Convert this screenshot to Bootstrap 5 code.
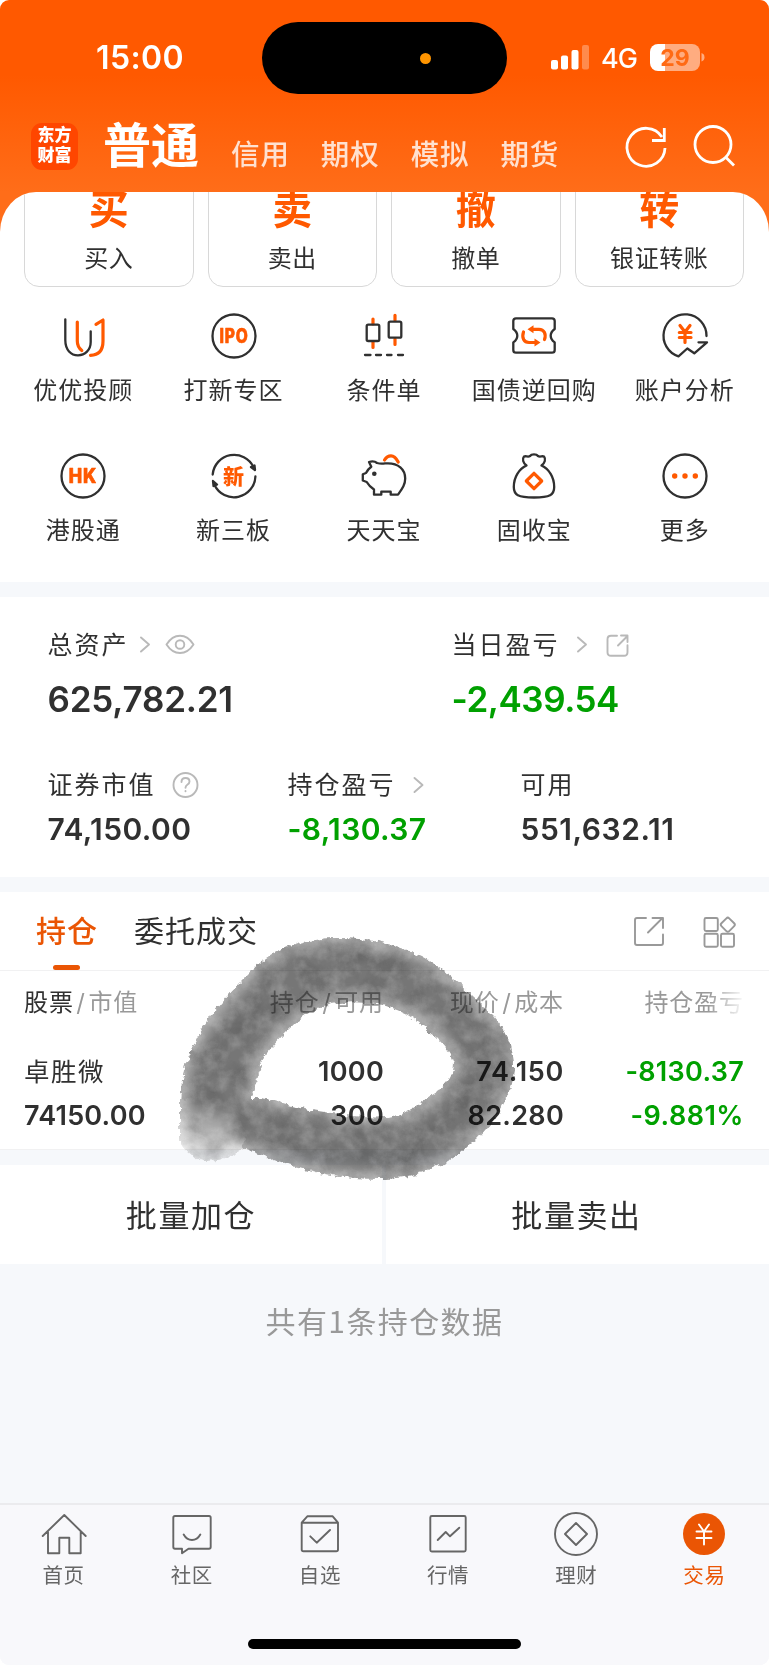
<!DOCTYPE html>
<html lang="zh-CN">
<head>
<meta charset="utf-8">
<meta name="viewport" content="width=device-width, initial-scale=1">
<title>交易</title>
<link href="https://cdn.jsdelivr.net/npm/bootstrap@5.3.0/dist/css/bootstrap.min.css" rel="stylesheet">
<style>
:root{--brand:#ff5900;--brand-deep:#ea5504;--ink:#303030;--fall:#00a000;--band:#f6f8fb}
body{font-family:Inter,"Noto Sans CJK SC",sans-serif;color:var(--ink);background:#fff;line-height:1.2}
svg{display:block;flex:none;fill:none;stroke-linecap:round;stroke-linejoin:round}
svg text{stroke:none}
.screen{width:769px;height:1665px;border-radius:9px;overflow:hidden;background:linear-gradient(#ff5900 0,#ff5900 75px,#ff6d19 192px,#ff6d19 240px,var(--band) 240px)}
/* status bar and title */
.status{height:115px;position:relative}
.clock{position:absolute;left:96px;top:39px;font-size:32px;font-weight:600;letter-spacing:.4px}
.island{position:absolute;left:262px;top:22px;width:245px;height:72px;border-radius:36px;background:#000}
.island i{position:absolute;left:158px;top:31px;width:11px;height:11px;border-radius:50%;background:#ff9500}
.radio{position:absolute;left:550px;top:40px}
.titlebar{height:77px;padding-left:31px}
.logo{width:47px;height:47px;border-radius:11px;background:#ff4600;font-size:17px;line-height:20px;font-weight:900;margin-top:8px;padding-top:2px}
.title{font-size:48px;font-weight:700;line-height:62px;margin-left:25px;width:96px}
.kinds{margin-left:32px;gap:31px;font-size:28.5px;font-weight:500;line-height:40px;padding-top:20px;color:#ffe1d0;letter-spacing:.9px}
/* sheet */
.sheet{background:#fff;border-radius:36px 36px 0 0/40px 40px 0 0;overflow:hidden}
.trades{height:95px;padding:0 25px 0 24px;gap:14px}
.trade{height:114.500px;margin-top:-20px;border:1.5px solid #d8d8d8;border-radius:15px;padding-top:12px}
.trade b{font-size:40px;line-height:50px;color:var(--brand);font-weight:700}
.trade span{font-size:24px;line-height:30px;margin-top:9px;letter-spacing:.6px}
.tools{height:295px;padding:0 9px 0 8px}
.tool{width:20%;height:140px;padding-top:25px;font-size:24px;letter-spacing:1px}
.tool span{line-height:30px;margin-top:15.500px}
.ico{stroke:#303030;stroke-width:2.3}
.ico .o{stroke:var(--brand);stroke-width:3.2}
.ico .t{stroke:var(--brand);stroke-width:.7;fill:var(--brand)}
.gap-band{height:15px;background:var(--band)}
/* assets */
.assets{height:280px;padding:32px 47.500px 0}
.lbl{font-size:25px;letter-spacing:2px;height:32px;line-height:32px}
.big{font-size:35px;font-weight:600;line-height:44px;margin-top:16px;letter-spacing:-.2px}
.mid{font-size:30px;font-weight:600;line-height:36px;margin-top:10px;letter-spacing:.4px}
.fall{color:var(--fall)}
.soft{stroke:#b9b9b9;stroke-width:1.9}
/* positions */
.tabsrow{height:79px;border-bottom:1.5px solid #f1f1f2;padding:0 32px 0 36px;font-size:30px;letter-spacing:1px}
.tab-on{color:var(--brand-deep);font-weight:500;position:relative}
.tab-on::after{content:"";position:absolute;left:17px;top:51.500px;width:27px;height:5px;border-radius:3px;background:var(--brand-deep)}
.g9{stroke:#999;stroke-width:1.9}
.holdings{height:178px;padding:0 25px 0 24px;display:grid;grid-template-columns:186px 174px 180px 180px;grid-template-rows:64px 18px 38px 50px}
.holdings>*{text-align:right;white-space:nowrap;align-self:center}
.holdings .first{text-align:left}
.hd{font-size:24px;color:#999;letter-spacing:.9px}
.hd u{text-decoration:none;padding:0 2.500px}
.num{font-size:27px;font-weight:600;letter-spacing:.3px}
.fade-end{-webkit-mask-image:linear-gradient(90deg,#000 80%,transparent 101%);mask-image:linear-gradient(90deg,#000 80%,transparent 101%)}
.holdings-wrap{position:relative}
.scribble{position:absolute;left:165px;top:-42px;mix-blend-mode:multiply;z-index:3}
.batch{height:99px;font-size:31px;letter-spacing:1.6px;background:#fff;padding-top:2px}
.batch .lft{width:382px}
.batch div+div{border-left:4px solid var(--band);width:387px;padding-right:2px;margin-top:-2px;padding-top:2px}
.tail{height:239px;background:var(--band);color:#999;font-family:"Noto Sans CJK SC",sans-serif;font-size:30px;letter-spacing:1.4px;line-height:36px;padding-top:38px}
.tabbar{height:162px;background:#f8f8fb;border-top:2px solid #ebebee;padding-top:5px;font-size:20.5px;color:#666;letter-spacing:.6px;position:relative}
.tabbar .it{position:relative;left:-.500px}
.tabbar span{margin-top:4.500px;line-height:26px}
.tabbar svg{stroke:#666;stroke-width:1.9}
.home-ind{position:absolute;left:248px;bottom:16px;width:273px;height:10px;border-radius:5px;background:#000}
</style>
</head>
<body>
<div class="screen d-flex flex-column">
  <header class="text-white">
    <div class="status">
      <div class="clock">15:00</div>
      <div class="island"><i></i></div>
      <svg class="radio" width="156" height="36" viewBox="550 40 156 36">
        <g fill="#fff"><rect x="551" y="60" width="7" height="9.5" rx="2"/><rect x="561" y="55.5" width="7" height="14" rx="2"/><rect x="571.5" y="50" width="7" height="19.5" rx="2"/><rect x="582" y="45" width="7" height="24.5" rx="2" opacity=".3"/>
        <path d="M659 44h-1a8 8 0 0 0-8 8v11a8 8 0 0 0 8 8h7V44z"/><path d="M665 44h27a8 8 0 0 1 8 8v11a8 8 0 0 1-8 8h-27z" opacity=".5"/><path d="M701.5 53q3 1 3 4.200t-3 4.200z" opacity=".5"/>
        <text x="601" y="68" font-size="27" font-weight="500" textLength="37">4G</text></g>
        <text x="675" y="65.500" font-size="23" font-weight="700" text-anchor="middle" fill="#ff6a14">29</text>
      </svg>
    </div>
    <div class="titlebar d-flex align-items-start">
      <div class="logo text-center">东方<br>财富</div>
      <div class="title">普通</div>
      <nav class="kinds d-flex"><span>信用</span><span>期权</span><span>模拟</span><span>期货</span></nav>
      <svg class="ms-auto" width="118" height="60" viewBox="620 115 118 60" stroke="#fff" stroke-width="2.800" style="margin-right:30.500px"><path d="M661 137A19 19 0 1 0 664 148" stroke-linecap="butt"/><path d="M663.300 128v12.500H651" stroke-linecap="butt" stroke-linejoin="miter"/><circle cx="712" cy="144.500" r="18"/><path d="M725 157.500l8 8" stroke-linecap="butt"/></svg>
    </div>
  </header>

  <main class="sheet">
    <div class="trades d-flex">
      <div class="trade flex-fill w-25 d-flex flex-column align-items-center"><b>买</b><span>买入</span></div>
      <div class="trade flex-fill w-25 d-flex flex-column align-items-center"><b>卖</b><span>卖出</span></div>
      <div class="trade flex-fill w-25 d-flex flex-column align-items-center"><b>撤</b><span>撤单</span></div>
      <div class="trade flex-fill w-25 d-flex flex-column align-items-center"><b>转</b><span>银证转账</span></div>
    </div>
    <div class="tools d-flex flex-wrap align-content-start">
      <div class="tool d-flex flex-column align-items-center"><svg class="ico" width="48" height="48"><path d="M6.300 7.300V28C6.300 38 12 43.300 19 43.300S31.700 38 31.700 30V19.300"/><path class="o" d="M18.300 10v19q0 6 4.500 9.500M37 12.400L44 8v21q0 14-12.500 14.300"/></svg><span>优优投顾</span></div>
      <div class="tool d-flex flex-column align-items-center"><svg class="ico" width="48" height="48"><circle cx="24" cy="24" r="21.500"/><text class="t" x="24" y="31" font-size="19.500" font-weight="800" text-anchor="middle" textLength="29" lengthAdjust="spacingAndGlyphs">IPO</text></svg><span>打新专区</span></div>
      <div class="tool d-flex flex-column align-items-center"><svg class="ico" width="48" height="48"><path class="o" d="M13 7v5M13 30v5.500M35 3.300v5M35 27v5.500"/><rect x="6.700" y="12.700" width="12.600" height="16.300" rx="1.500"/><rect x="28.700" y="9.700" width="12.600" height="16" rx="1.500"/><path d="M5 43h5.500M16 43h5M27 43h4.500M38 43h5"/></svg><span>条件单</span></div>
      <div class="tool d-flex flex-column align-items-center"><svg class="ico" width="48" height="48"><path d="M6 6.300H42q2.700 0 2.700 2.700V17q-4 3-4 6.700t4 6.700V38q0 2.700-2.700 2.700H6q-2.700 0-2.700-2.700V30.400q4-3 4-6.700t-4-6.700V9q0-2.700 2.700-2.700z"/><path class="o" d="M34.500 27.500C36.500 22 34 17.300 29 17.300H22M13.500 20C11.500 26 14 30.500 19 30.500H26"/><path d="M17.500 17.300l6-4v8zM30.500 30.500l-6-4v8z" fill="#ff5900" stroke="none"/></svg><span>国债逆回购</span></div>
      <div class="tool d-flex flex-column align-items-center"><svg class="ico" width="48" height="48"><path d="M45.500 24A21.500 21.500 0 1 0 17.500 44.300L26.300 36.500 33.300 41.300 46 30.300H37.500"/><path class="o" d="M19 13.500l5 6.500 5-6.500M18.300 20.500H30M18.300 25.500H30M24 20V30.500"/></svg><span>账户分析</span></div>
      <div class="tool d-flex flex-column align-items-center"><svg class="ico" width="48" height="48"><circle cx="24" cy="24" r="21.500"/><text class="t" x="24" y="31" font-size="19.500" font-weight="800" text-anchor="middle" textLength="28.500" lengthAdjust="spacingAndGlyphs">HK</text></svg><span>港股通</span></div>
      <div class="tool d-flex flex-column align-items-center"><svg class="ico" width="48" height="48"><path d="M2.700 22.500A21.500 21.500 0 0 1 43.500 15M45.400 24.500A21.500 21.500 0 0 1 4.500 33"/><path d="M45 18l-4-3 3.500-1.500zM3 29l4 3.500-3.500 1.500z" fill="#303030"/><text x="24" y="31.500" font-size="21" font-weight="900" text-anchor="middle" fill="#ff5900">新</text></svg><span>新三板</span></div>
      <div class="tool d-flex flex-column align-items-center"><svg class="ico" width="48" height="48"><path class="o" d="M24.500 8Q27 3.800 31 3.800T38.200 10"/><path fill="#fff" d="M9 10q5-1.500 8 1 4 1 8 .300h3C38 11.300 45.200 17 45.200 26.500 45.200 33 42 37 38 42.700H30.700V39.700H21.300V42.700H14V37.500Q9 34 6.700 30L2.800 28.500V22.300L6 21Q8 17 11.300 14.700z"/><circle cx="14.300" cy="21.800" r="2.300" fill="#303030" stroke="none"/></svg><span>天天宝</span></div>
      <div class="tool d-flex flex-column align-items-center"><svg class="ico" width="48" height="48"><path d="M16.500 13.500C13 11 12 7 14 4.500 16 3.500 18 5.500 20 4 21.500 1.800 26.500 1.800 28 4 30 5.500 32 3.500 34 4.500 36 7 35 11 31.500 13.500 39 17 44.200 25 44.200 35 44.200 43 40 45.500 24 45.500S3.800 43 3.800 35C3.800 25 9 17 16.500 13.500z"/><path class="o" d="M24 21.300l7.700 7.700-7.700 7.700-7.700-7.700z"/></svg><span>固收宝</span></div>
      <div class="tool d-flex flex-column align-items-center"><svg class="ico" width="48" height="48"><circle cx="24" cy="24" r="21.500"/><g fill="#ff5900" stroke="none"><circle cx="13.700" cy="24" r="2.700"/><circle cx="24" cy="24" r="2.700"/><circle cx="34.300" cy="24" r="2.700"/></g></svg><span>更多</span></div>
    </div>
    <div class="gap-band"></div>

    <section class="assets">
      <div class="d-flex">
        <div style="width:404px">
          <div class="lbl d-flex align-items-center"><span>总资产</span>
            <svg class="soft" width="70" height="26" viewBox="129 632 70 26"><path d="M141 637.500l8 7-8 7"/><path d="M166.500 644.500Q172 635.700 180 635.700T193.500 644.500Q188 653 180 653T166.500 644.500z"/><circle cx="180" cy="644.500" r="4.300"/></svg></div>
          <div class="big">625,782.21</div>
        </div>
        <div>
          <div class="lbl d-flex align-items-center"><span>当日盈亏</span>
            <svg class="soft" width="80" height="28" viewBox="560 631 80 28"><path d="M578 637.500l8 7-8 7"/><path d="M617 635.700h-6q-3.500 0-3.500 3.500v13q0 3.500 3.500 3.500h13q3.500 0 3.500-3.500v-7M618 645.500l9-9M621 635.500h6.500v6.500"/></svg></div>
          <div class="big fall" style="letter-spacing:-.450px">-2,439.54</div>
        </div>
      </div>
      <div class="d-flex" style="margin-top:48px">
        <div style="width:240px">
          <div class="lbl d-flex align-items-center"><span>证券市值</span>
            <svg class="soft" width="50" height="28" viewBox="156 771 50 28"><circle cx="185.500" cy="785" r="12"/><path d="M181.500 782q0-4 4-4t4 3.500q0 2-2.200 3.300-1.800 1.200-1.800 3M185.500 791v.3"/></svg></div>
          <div class="mid">74,150.00</div>
        </div>
        <div style="width:233px">
          <div class="lbl d-flex align-items-center"><span>持仓盈亏</span>
            <svg class="soft" width="40" height="28" viewBox="395.500 771 40 28"><path d="M414 778l8 7-8 7"/></svg></div>
          <div class="mid fall">-8,130.37</div>
        </div>
        <div><div class="lbl">可用</div><div class="mid" style="letter-spacing:.550px">551,632.11</div></div>
      </div>
    </section>
    <div class="gap-band"></div>

    <div class="tabsrow d-flex align-items-center">
      <span class="tab-on">持仓</span><span style="margin-left:36px">委托成交</span>
      <svg class="g9 ms-auto" width="106" height="36" viewBox="631 913 106 36"><path d="M646 918h-9q-2 0-2 2v23q0 2 2 2h24q2 0 2-2v-8.500M648 932.500L662 918.500M652.500 918H663v10"/><rect x="704.500" y="918" width="13.300" height="13" rx="1.500"/><rect x="704.500" y="933.700" width="13.300" height="13" rx="1.500"/><rect x="721" y="933.700" width="13" height="13" rx="1.500"/><rect x="722.300" y="919.200" width="11" height="11" rx="2" transform="rotate(45 727.800 924.700)"/></svg>
    </div>
    <div class="holdings-wrap">
      <div class="holdings">
        <div class="first hd"><span style="color:#303030">股票</span><u>/</u>市值</div><div class="hd">持仓<u>/</u>可用</div><div class="hd">现价<u>/</u>成本</div><div class="hd fade-end">持仓盈亏</div>
        <i></i><i></i><i></i><i></i>
        <div class="first" style="font-size:25.500px;letter-spacing:1.500px">卓胜微</div><div class="num">1000</div><div class="num" style="letter-spacing:.700px">74.150</div><div class="num fall">-8130.37</div>
        <div class="first num" style="letter-spacing:.200px">74150.00</div><div class="num">300</div><div class="num">82.280</div><div class="num fall" style="letter-spacing:.500px">-9.881%</div>
      </div>
      <svg class="scribble" width="365" height="260" viewBox="165 929 365 260">
        <defs>
          <linearGradient id="wash" gradientUnits="userSpaceOnUse" x1="218" y1="1080" x2="206" y2="1162"><stop offset="0" stop-color="#7f7f7f"/><stop offset=".35" stop-color="#999"/><stop offset=".65" stop-color="#bfbfbf"/><stop offset="1" stop-color="#eaeaea"/></linearGradient>
          <filter id="ink" filterUnits="userSpaceOnUse" x="165" y="929" width="365" height="260" color-interpolation-filters="sRGB">
            <feTurbulence type="fractalNoise" baseFrequency=".16" numOctaves="3" seed="4" result="fine"/>
            <feDisplacementMap in="SourceGraphic" in2="fine" scale="7" xChannelSelector="R" yChannelSelector="G"/>
            <feGaussianBlur stdDeviation=".6" result="rough"/>
            <feTurbulence type="fractalNoise" baseFrequency=".04" numOctaves="5" seed="11"/>
            <feColorMatrix values="0 0 0 0 .25  0 0 0 0 .25  0 0 0 0 .25  .6 0 0 0 -.24" result="dark"/>
            <feComposite in="dark" in2="rough" operator="in" result="darkIn"/>
            <feTurbulence type="fractalNoise" baseFrequency=".07" numOctaves="5" seed="23"/>
            <feColorMatrix values="0 0 0 0 1  0 0 0 0 1  0 0 0 0 1  .4 0 0 0 -.15" result="light"/>
            <feComposite in="light" in2="rough" operator="in" result="lightIn"/>
            <feMorphology in="rough" operator="erode" radius="6"/><feGaussianBlur stdDeviation="6" result="core"/>
            <feComponentTransfer in="rough" result="pale"><feFuncA type="linear" slope=".62"/></feComponentTransfer>
            <feComposite in="core" in2="rough" operator="in" result="coreIn"/>
            <feMerge><feMergeNode in="pale"/><feMergeNode in="coreIn"/><feMergeNode in="darkIn"/><feMergeNode in="lightIn"/></feMerge>
          </filter>
        </defs>
        <g filter="url(#ink)">
          <path fill="url(#wash)" d="M180 1100L184 1070 262 1065 250 1100 256 1120 243 1149Q226 1161 207 1161 187 1158 180 1141z"/>
          <path fill="#767676" fill-rule="evenodd" d="M181 1098C180 1080 187 1055 199 1035 214 1008 234 988 252 970 275 949 298 941 330 938 365 937 395 944 421 956 444 968 470 992 492 1015 507 1031 515 1050 514 1070 512 1096 497 1118 477 1139 447 1165 422 1177 385 1179 340 1180 300 1170 262 1155L243 1148 245 1128 240 1106zM250 1098C272 1097 285 1106 310 1110 340 1114 360 1119 387 1117 409 1115 421 1101 436 1092 448 1084 454 1074 454 1063 449 1046 432 1033 413 1018 392 1003 361 1001 337 1003 306 1007 290 1028 271 1048 258 1063 249 1080 250 1098z"/>
        </g>
      </svg>
      <div class="gap-band" style="border-top:1.500px solid #f1f1f2;height:16px"></div>
    </div>
    <div class="batch d-flex"><div class="lft d-flex align-items-center justify-content-center">批量加仓</div><div class="d-flex align-items-center justify-content-center">批量卖出</div></div>
    <div class="tail text-center">共有1条持仓数据</div>
  </main>

  <footer class="tabbar d-flex">
    <div class="it flex-fill w-25 d-flex flex-column align-items-center"><svg width="48" height="48"><path d="M2.700 26L24.300 5 45.700 26M8 21.700V43.300H19.300V27.700H29.300V43.300H40.700V21.700"/></svg><span>首页</span></div>
    <div class="it flex-fill w-25 d-flex flex-column align-items-center"><svg width="48" height="48"><path d="M7 6H41q1.700 0 1.700 1.700V37q0 1.700-1.700 1.700H20.500L14 43.300V38.700H7q-1.700 0-1.700-1.700V7.700Q5.300 6 7 6zM15.700 24.500q3 5.500 8.300 5.500t8.300-5.500"/></svg><span>社区</span></div>
    <div class="it flex-fill w-25 d-flex flex-column align-items-center"><svg width="48" height="48"><path d="M5.700 12.700L11.300 6.300H36.700L42 12.700V39.500q0 1.800-1.800 1.800H7.500q-1.800 0-1.800-1.800zH42M14.300 26.300l6.400 6.400L34 20"/></svg><span>自选</span></div>
    <div class="it flex-fill w-25 d-flex flex-column align-items-center"><svg width="48" height="48"><rect x="6.300" y="6" width="35.400" height="35.500" rx="1.500"/><path d="M13.700 30l8-8 4.300 4.300 9.300-8.600"/></svg><span>行情</span></div>
    <div class="it flex-fill w-25 d-flex flex-column align-items-center"><svg width="48" height="48"><circle cx="24" cy="24" r="21"/><path d="M24 13l11 11-11 11-11-11z"/></svg><span>理财</span></div>
    <div class="it flex-fill w-25 d-flex flex-column align-items-center" style="color:#ea5504"><svg width="48" height="48"><circle cx="24" cy="24" r="21" fill="#ea5504" stroke="none"/><path stroke="#fff" d="M19 14.500l5 7 5-7M16.500 21.500H31.500M16.500 28H31.500M24 21.500V34.500"/></svg><span>交易</span></div>
    <div class="home-ind"></div>
  </footer>
</div>
<script src="https://cdn.jsdelivr.net/npm/bootstrap@5.3.0/dist/js/bootstrap.bundle.min.js"></script>
</body>
</html>
